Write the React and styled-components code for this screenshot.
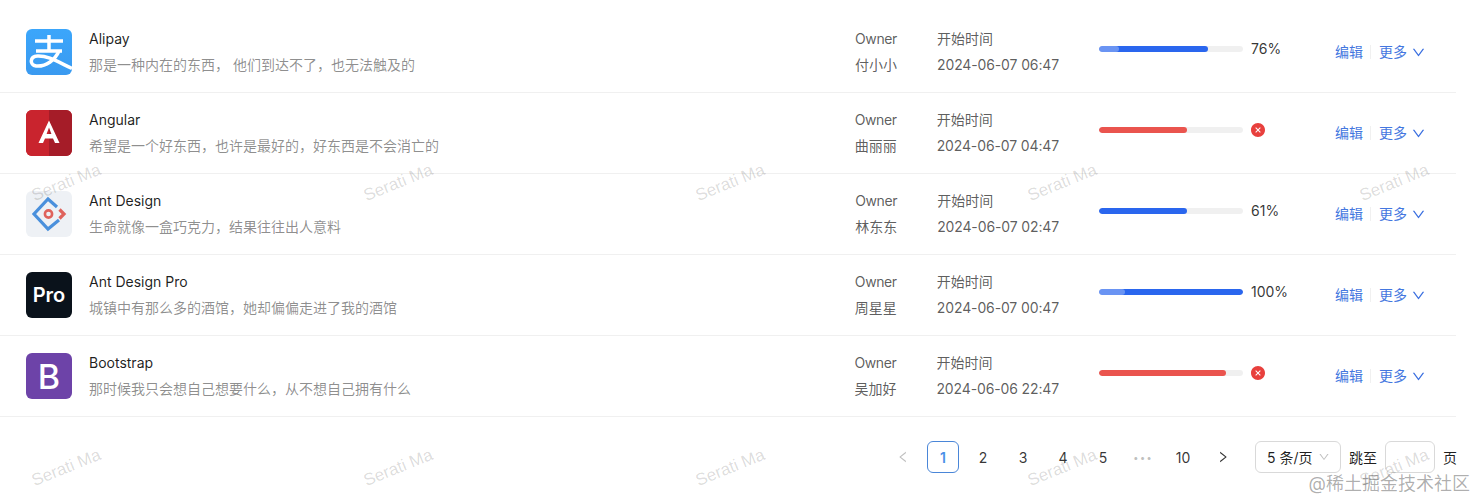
import React from 'react';
import styled, { createGlobalStyle } from 'styled-components';
import { AiOutlineDown, AiOutlineLeft, AiOutlineRight, AiFillCloseCircle } from 'react-icons/ai';

const Global = createGlobalStyle`
  html, body { margin: 0; padding: 0; background: #fff; height: 500px; overflow: hidden; }
  body { font-family: Inter, "Noto Sans CJK SC", sans-serif; font-size: 14px; color: rgba(0,0,0,.88); }
`;

const Page = styled.div`
  position: relative;
  width: 1477px;
  height: 500px;
  overflow: hidden;
  padding: 12px 20px 0 0;
  box-sizing: border-box;
`;
const List = styled.div`
  width: 1456px;
  display: flex;
  flex-direction: column;
`;
const Row = styled.div`
  display: flex;
  align-items: center;
  height: 81px;
  box-sizing: border-box;
  padding: 16px 22px 16px 26px;
  border-bottom: 1px solid rgba(5,5,5,.06);
`;
const Avatar = styled.div`
  width: 46px;
  height: 46px;
  flex: none;
  border-radius: 6px;
  overflow: hidden;
  display: flex;
  align-items: center;
  justify-content: center;
  background: ${p => p.$bg};
  color: #fff;
  font-weight: ${p => p.$weight || 500};
  font-size: ${p => p.$size || 14}px;
  svg { display: block; }
`;
const Main = styled.div`
  flex: 1;
  margin-left: 17px;
  display: flex;
  flex-direction: column;
  gap: 4px;
`;
const Title = styled.div`
  line-height: 22px;
  color: rgba(0,0,0,.88);
`;
const Desc = styled.div`
  line-height: 22px;
  color: rgba(0,0,0,.45);
`;
const Cell = styled.div`
  margin-left: 40px;
  display: flex;
  flex-direction: column;
  gap: 4px;
  line-height: 22px;
  color: rgba(0,0,0,.65);
`;
const OwnerLabel = styled.span`
  letter-spacing: -0.4px;
`;
const TimeValue = styled.span`
  letter-spacing: -0.13px;
`;
const ProgressCell = styled.div`
  margin-left: 40px;
  width: 180px;
  height: 22px;
  margin-bottom: 6px;
  display: flex;
  align-items: center;
  gap: 8px;
`;
const Track = styled.div`
  position: relative;
  width: 144px;
  height: 6px;
  border-radius: 3px;
  background: rgba(0,0,0,.06);
  overflow: hidden;
  flex: none;
`;
const Fill = styled.div`
  height: 100%;
  border-radius: 3px;
  background: ${p => (p.$error ? '#ea544e' : '#2a66ee')};
  width: ${p => p.$value}%;
`;
const Shine = styled.div`
  position: absolute;
  left: 0;
  top: 0;
  height: 100%;
  border-radius: 3px;
  background: rgba(255,255,255,.3);
  width: ${p => p.$width}px;
`;
const Percent = styled.span`
  line-height: 22px;
  color: rgba(0,0,0,.8);
`;
const ErrorIcon = styled(AiFillCloseCircle)`
  width: 16px;
  height: 16px;
  margin-left: -1px;
  color: #e8403d;
`;
const Actions = styled.div`
  margin-left: 48px;
  display: flex;
  align-items: center;
`;
const Action = styled.a`
  position: relative;
  padding: 0 8px;
  display: flex;
  align-items: center;
  gap: 4px;
  line-height: 22px;
  color: #4477e0;
  svg { width: 15px; height: 15px; color: #3a6fe0; }
  &:first-child::after {
    content: '';
    position: absolute;
    right: 0;
    top: 4px;
    width: 1px;
    height: 14px;
    background: rgba(5,5,5,.06);
  }
`;
const Pager = styled.div`
  display: flex;
  align-items: center;
  justify-content: flex-end;
  margin-top: 24px;
  width: 1457px;
  height: 32px;
`;
const PageItem = styled.div`
  width: 32px;
  height: 32px;
  margin-right: 8px;
  box-sizing: border-box;
  display: flex;
  align-items: center;
  justify-content: center;
  border-radius: 6px;
  border: 1px solid ${p => (p.$active ? '#4a86d8' : 'transparent')};
  color: ${p => (p.$active ? '#4a8fe8' : p.$muted ? 'rgba(0,0,0,.25)' : 'rgba(0,0,0,.8)')};
  font-weight: ${p => (p.$active ? 600 : 400)};
  svg { width: 14px; height: 14px; }
`;
const Dots = styled.span`
  font-size: 10px;
  letter-spacing: 1px;
  color: rgba(0,0,0,.25);
`;
const Select = styled.div`
  width: 86px;
  height: 32px;
  margin-left: 8px;
  box-sizing: border-box;
  border: 1px solid #d9d9d9;
  border-radius: 6px;
  padding: 0 10px 0 11px;
  display: flex;
  align-items: center;
  justify-content: space-between;
  color: rgba(0,0,0,.88);
  svg { width: 12px; height: 12px; color: rgba(0,0,0,.25); }
`;
const Jump = styled.div`
  margin-left: 8px;
  display: flex;
  align-items: center;
  gap: 8px;
  color: rgba(0,0,0,.88);
`;
const JumpInput = styled.div`
  width: 50px;
  height: 32px;
  box-sizing: border-box;
  border: 1px solid #d9d9d9;
  border-radius: 6px;
`;
const MarkLayer = styled.div`
  position: absolute;
  left: -100px;
  top: 40px;
  display: grid;
  grid-template-columns: repeat(5, 332px);
  grid-auto-rows: 285px;
  pointer-events: none;
`;
const Mark = styled.div`
  display: flex;
  align-items: center;
  justify-content: center;
  font-family: "Liberation Sans", sans-serif;
  font-size: 17px;
  color: rgba(0,0,0,.15);
  span { display: block; transform: rotate(-22deg); white-space: nowrap; }
`;
const Juejin = styled.div`
  position: absolute;
  right: 7px;
  bottom: 4px;
  font-size: 18px;
  line-height: 24px;
  color: rgba(0,0,0,.32);
  white-space: nowrap;
`;

const AlipayLogo = () => (
  <svg width="46" height="46" viewBox="0 0 46 46" fill="none" stroke="#fff" strokeWidth="3.5">
    <path d="M9 12H37M23 6V22M10 22H36" />
    <path d="M33 22C29 31 20 38 10 37C3.5 36 3.5 27.5 11.5 27C22 26.5 32 33 46 39.5" />
  </svg>
);
const AngularLogo = () => (
  <svg width="46" height="46" viewBox="0 0 46 46">
    <rect width="23" height="46" fill="#c9242e" />
    <rect x="23" width="23" height="46" fill="#a51c28" />
    <path fillRule="evenodd" fill="#fff" d="M23 10.5L33.5 33H29L27 28.5H19L17 33H12.5ZM23 17.5L20.6 24H25.4Z" />
  </svg>
);
const AntLogo = () => (
  <svg width="46" height="46" viewBox="0 0 46 46" fill="none">
    <path d="M31 16L22 8L8 23L22 38L33 29" stroke="#4a90dc" strokeWidth="3.2" />
    <circle cx="22.5" cy="23" r="3.6" stroke="#df625c" strokeWidth="2.6" />
    <path d="M33.5 18.5L38 23L33.5 27.5" stroke="#df625c" strokeWidth="3.2" />
  </svg>
);

const rows = [
  { name: 'Alipay', desc: '那是一种内在的东西， 他们到达不了，也无法触及的', owner: '付小小', time: '2024-06-07 06:47', value: 76, shine: 20, avatar: <Avatar $bg="linear-gradient(#3ba6fb,#3a9af0)"><AlipayLogo /></Avatar> },
  { name: 'Angular', desc: '希望是一个好东西，也许是最好的，好东西是不会消亡的', owner: '曲丽丽', time: '2024-06-07 04:47', value: 61, error: true, avatar: <Avatar $bg="#c9242e"><AngularLogo /></Avatar> },
  { name: 'Ant Design', desc: '生命就像一盒巧克力，结果往往出人意料', owner: '林东东', time: '2024-06-07 02:47', value: 61, avatar: <Avatar $bg="#eef1f5"><AntLogo /></Avatar> },
  { name: 'Ant Design Pro', desc: '城镇中有那么多的酒馆，她却偏偏走进了我的酒馆', owner: '周星星', time: '2024-06-07 00:47', value: 100, shine: 26, avatar: <Avatar $bg="#0a121b" $size={20} $weight={600}>Pro</Avatar> },
  { name: 'Bootstrap', desc: '那时候我只会想自己想要什么，从不想自己拥有什么', owner: '吴加好', time: '2024-06-06 22:47', value: 88, error: true, avatar: <Avatar $bg="#6d43a8" $size={34}>B</Avatar> },
];

export default function App() {
  return (
    <Page>
      <Global />
      <List>
        {rows.map(r => (
          <Row key={r.name}>
            {r.avatar}
            <Main>
              <Title>{r.name}</Title>
              <Desc>{r.desc}</Desc>
            </Main>
            <Cell>
              <OwnerLabel>Owner</OwnerLabel>
              <span>{r.owner}</span>
            </Cell>
            <Cell>
              <span>开始时间</span>
              <TimeValue>{r.time}</TimeValue>
            </Cell>
            <ProgressCell>
              <Track>
                <Fill $value={r.value} $error={r.error} />
                {r.shine ? <Shine $width={r.shine} /> : null}
              </Track>
              {r.error ? <ErrorIcon /> : <Percent>{r.value}%</Percent>}
            </ProgressCell>
            <Actions>
              <Action>编辑</Action>
              <Action>更多 <AiOutlineDown /></Action>
            </Actions>
          </Row>
        ))}
      </List>
      <Pager>
        <PageItem $muted><AiOutlineLeft /></PageItem>
        <PageItem $active>1</PageItem>
        <PageItem>2</PageItem>
        <PageItem>3</PageItem>
        <PageItem>4</PageItem>
        <PageItem>5</PageItem>
        <PageItem><Dots>•••</Dots></PageItem>
        <PageItem>10</PageItem>
        <PageItem><AiOutlineRight /></PageItem>
        <Select>5 条/页<AiOutlineDown /></Select>
        <Jump>跳至<JumpInput />页</Jump>
      </Pager>
      <MarkLayer>
        {Array.from({ length: 10 }, (_, i) => (
          <Mark key={i}><span>Serati Ma</span></Mark>
        ))}
      </MarkLayer>
      <Juejin>@稀土掘金技术社区</Juejin>
    </Page>
  );
}
